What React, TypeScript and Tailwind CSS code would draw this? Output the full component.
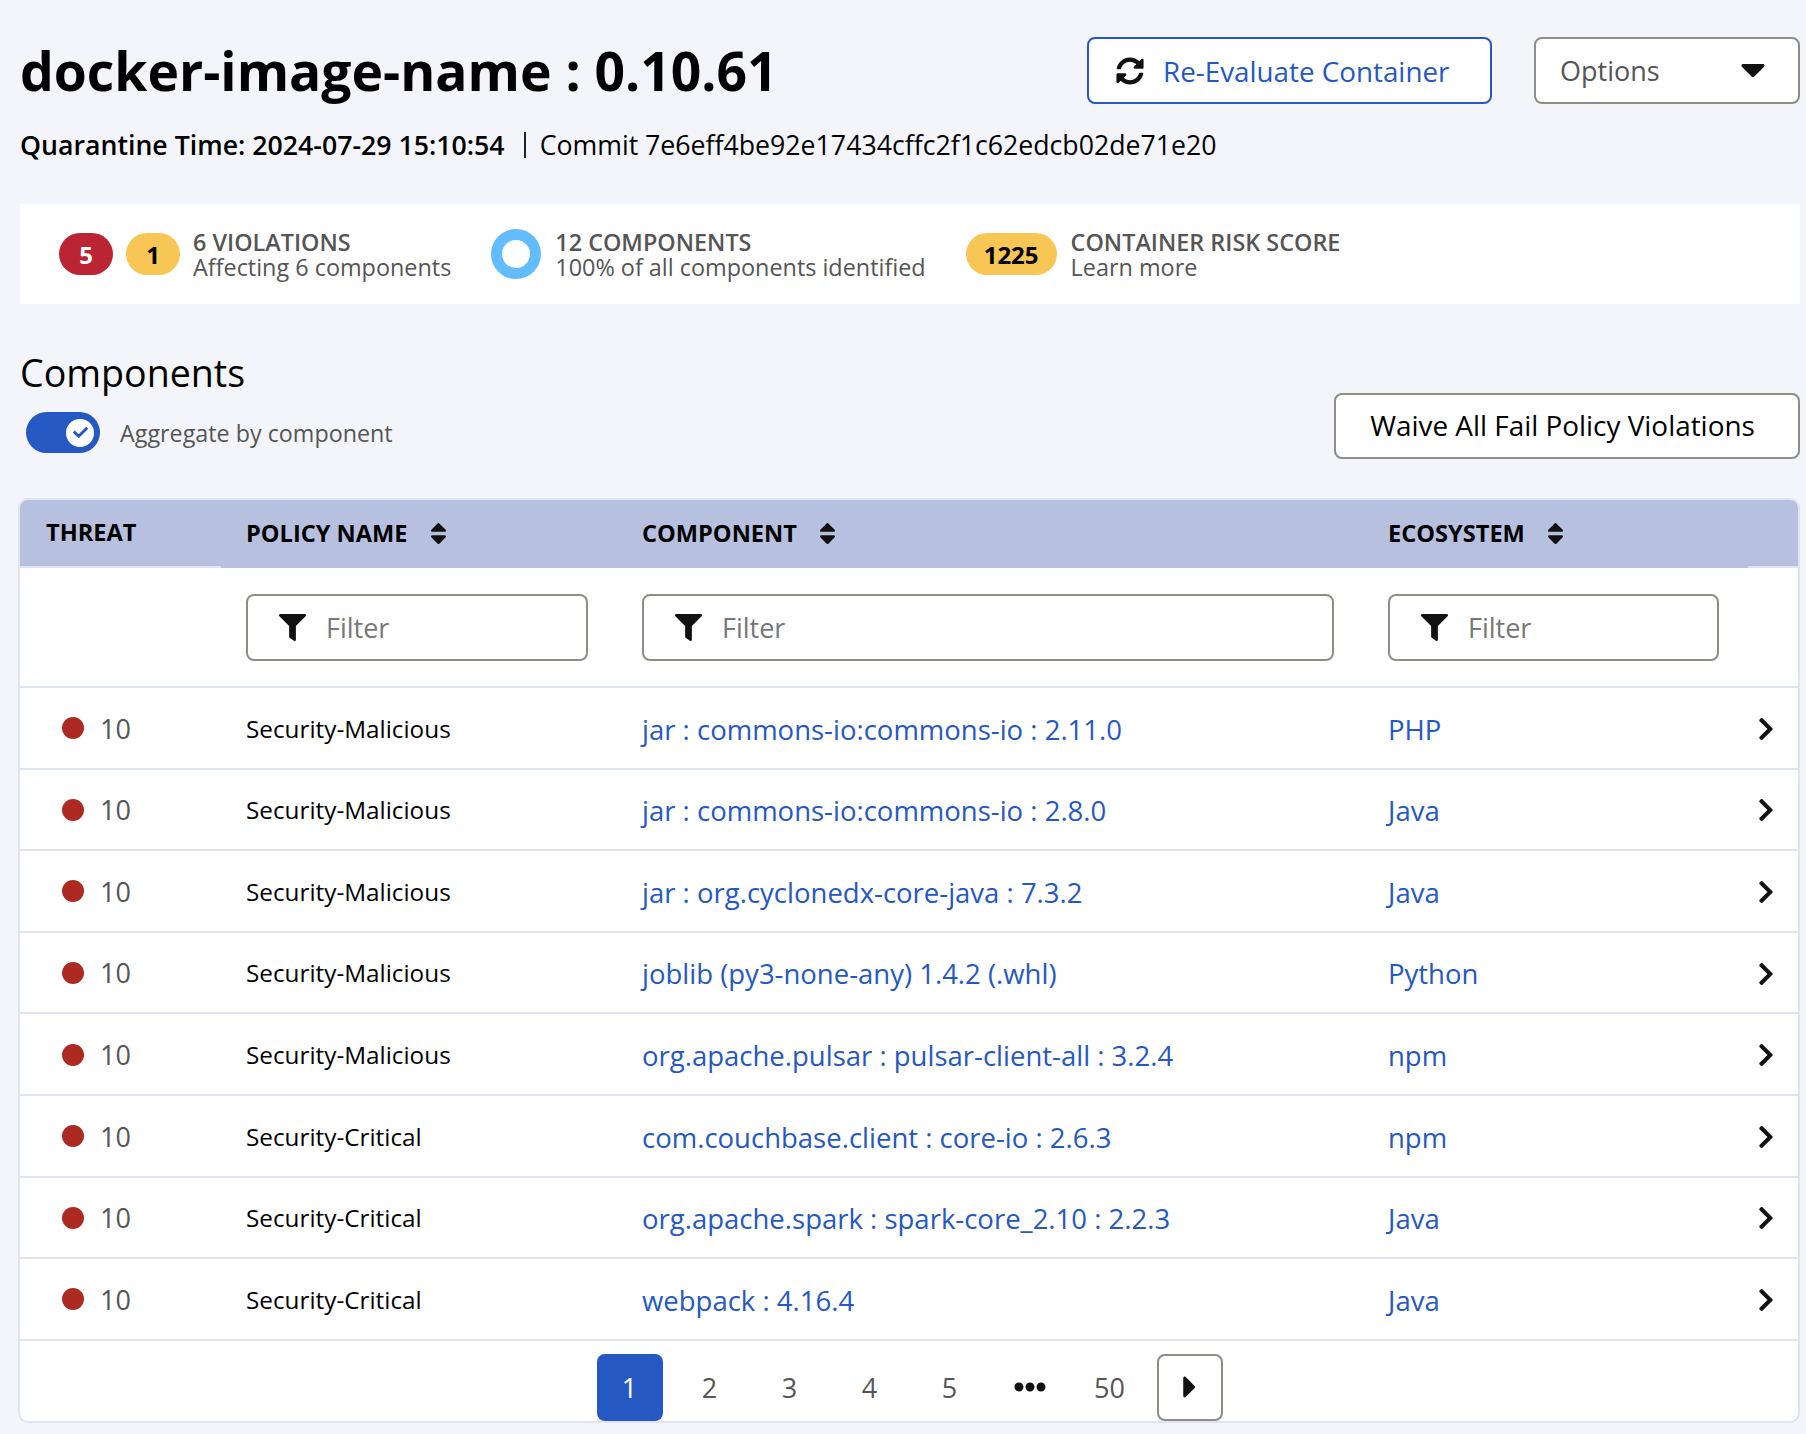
import React from 'react';
import { FaCaretDown, FaCaretRight, FaCheck, FaChevronRight, FaEllipsisH, FaFilter, FaSort, FaSyncAlt } from 'react-icons/fa';

const rows = [
  { policy: 'Security-Malicious', component: 'jar : commons-io:commons-io : 2.11.0', ecosystem: 'PHP' },
  { policy: 'Security-Malicious', component: 'jar : commons-io:commons-io : 2.8.0', ecosystem: 'Java' },
  { policy: 'Security-Malicious', component: 'jar : org.cyclonedx-core-java : 7.3.2', ecosystem: 'Java' },
  { policy: 'Security-Malicious', component: 'joblib (py3-none-any) 1.4.2 (.whl)', ecosystem: 'Python' },
  { policy: 'Security-Malicious', component: 'org.apache.pulsar : pulsar-client-all : 3.2.4', ecosystem: 'npm' },
  { policy: 'Security-Critical', component: 'com.couchbase.client : core-io : 2.6.3', ecosystem: 'npm' },
  { policy: 'Security-Critical', component: 'org.apache.spark : spark-core_2.10 : 2.2.3', ecosystem: 'Java' },
  { policy: 'Security-Critical', component: 'webpack : 4.16.4', ecosystem: 'Java' },
];

const columns = 'grid grid-cols-[201px_396px_746px_385px_1fr]';

function SortHeader({ label }: { label: string }) {
  return (
    <div className="flex items-center gap-[17px] pl-[25px]">
      <span>{label}</span>
      <FaSort className="text-[27px] text-[#111]" />
    </div>
  );
}

function FilterInput({ width }: { width: string }) {
  return (
    <div className={`ml-[25px] flex h-[67px] items-center rounded-[8px] border-2 border-[#8e8e86] bg-white pl-[31px] ${width}`}>
      <FaFilter className="text-[27px] text-[#111]" />
      <span className="ml-[20px] pt-[2px] text-[27px] text-[#777]">Filter</span>
    </div>
  );
}

export default function App() {
  return (
    <div className="min-h-[1434px] bg-[#f3f5fb] pl-[20px] pr-[6px] pt-[37px] font-['Open_Sans',sans-serif] text-black">
      {/* Title and actions */}
      <div className="flex items-center justify-between">
        <h1 className="text-[53.4px] font-bold leading-[67px]">docker-image-name : 0.10.61</h1>
        <div className="flex gap-[42px]">
          <button className="flex h-[67px] w-[405px] items-center rounded-[8px] border-2 border-[#2558c3] bg-white pl-[27px] pt-[2px] text-[27.8px] font-medium text-[#2558c3]">
            <FaSyncAlt className="mb-[2px] mr-[19px] text-[28px] text-[#111]" />
            Re-Evaluate Container
          </button>
          <button className="flex h-[67px] w-[266px] items-center justify-between rounded-[8px] border-2 border-[#8e8e86] bg-white pl-[24px] pr-[25px] pt-[2px] text-[27px] text-[#555]">
            Options
            <FaCaretDown className="mb-[5px] text-[40px] text-[#111]" />
          </button>
        </div>
      </div>

      <div className="mt-[24px] flex h-[34px] items-center text-[26.7px] leading-[34px]">
        <span className="font-semibold">Quarantine Time: 2024-07-29 15:10:54</span>
        <span className="ml-[19px] mr-[14px] h-[26px] w-[2px] bg-[#222]" />
        <span>Commit 7e6eff4be92e17434cffc2f1c62edcb02de71e20</span>
      </div>

      {/* Summary band */}
      <div className="mt-[42px] flex h-[100px] items-center bg-white pl-[39px] text-[23.4px] leading-[25px] text-[#555]">
        <span className="flex h-[42px] w-[54px] items-center justify-center rounded-full bg-[#bb2533] text-[24px] font-bold text-white">5</span>
        <span className="ml-[13px] flex h-[42px] w-[54px] items-center justify-center rounded-full bg-[#f8c655] text-[24px] font-bold text-black">1</span>
        <div className="ml-[13px] pt-[2px]">
          <div className="font-semibold">6 VIOLATIONS</div>
          <div>Affecting 6 components</div>
        </div>
        <span className="ml-[40px] h-[50px] w-[50px] rounded-full border-[11px] border-[#63bcfd]" />
        <div className="ml-[14px] pt-[2px]">
          <div className="font-semibold">12 COMPONENTS</div>
          <div>100% of all components identified</div>
        </div>
        <span className="ml-[40px] flex h-[42px] w-[91px] items-center justify-center rounded-full bg-[#f8c655] text-[24px] font-bold text-black">1225</span>
        <div className="ml-[14px] pt-[2px]">
          <div className="font-semibold">CONTAINER RISK SCORE</div>
          <div>Learn more</div>
        </div>
      </div>

      {/* Components heading */}
      <div className="mt-[49px] flex h-[106px] items-end justify-between">
        <div className="mb-[6px]">
          <h2 className="text-[37.6px] font-medium leading-[40px]">Components</h2>
          <div className="ml-[6px] mt-[19px] flex items-center">
            <div className="flex h-[41px] w-[74px] items-center justify-end rounded-full bg-[#2558c3] pr-[6px]">
              <span className="flex h-[28px] w-[28px] items-center justify-center rounded-full bg-white">
                <FaCheck className="text-[15px] text-[#2558c3]" />
              </span>
            </div>
            <span className="ml-[20px] pt-[1px] text-[23.3px] text-[#555]">Aggregate by component</span>
          </div>
        </div>
        <button className="h-[66px] w-[466px] rounded-[8px] border-2 border-[#8e8e86] bg-white pr-[9px] text-[27.9px] font-medium">
          Waive All Fail Policy Violations
        </button>
      </div>

      {/* Table */}
      <div className="-ml-[2px] mt-[39px] h-[925px] overflow-hidden rounded-[10px] border-2 border-[#dfe3f2] bg-white">
        <div className={`${columns} h-[68px] items-center bg-[#b8c0e0] text-[23.6px] font-bold`}>
          <div className="flex h-full items-center border-b-2 border-[#dfe3f2] pl-[26px]">THREAT</div>
          <SortHeader label="POLICY NAME" />
          <SortHeader label="COMPONENT" />
          <SortHeader label="ECOSYSTEM" />
          <div className="h-full border-b-2 border-[#dfe3f2]" />
        </div>
        <div className={`${columns} h-[120px] items-center border-b-2 border-[#dfe3f2]`}>
          <div />
          <FilterInput width="w-[342px]" />
          <FilterInput width="w-[692px]" />
          <FilterInput width="w-[331px]" />
        </div>
        {rows.map((row) => (
          <div key={row.component} className={`${columns} h-[81.6px] items-center border-b-2 border-[#dfe3f2] pt-[2px]`}>
            <div className="flex items-center pl-[42px] text-[27px] text-[#555]">
              <span className="mb-[1px] h-[22px] w-[22px] rounded-full bg-[#ad2a22]" />
              <span className="ml-[16px]">10</span>
            </div>
            <div className="pl-[25px] text-[24.3px] font-medium">{row.policy}</div>
            <div className="pl-[25px] pt-[1px] text-[27.5px] font-medium text-[#2558c3]">{row.component}</div>
            <div className="pl-[25px] pt-[1px] text-[27.5px] font-medium text-[#2558c3]">{row.ecosystem}</div>
            <div className="flex justify-end pr-[19px]">
              <FaChevronRight className="text-[26px] text-[#111]" />
            </div>
          </div>
        ))}
        {/* Pagination */}
        <div className="flex justify-center pl-[1px] pt-[13px] text-[27px] text-[#555]">
          <div className="flex items-center gap-[14px]">
            <span className="flex h-[67px] w-[66px] items-center justify-center rounded-[8px] bg-[#2558c3] pt-[2px] font-medium text-white">1</span>
            {['2', '3', '4', '5'].map((n) => (
              <span key={n} className="flex h-[67px] w-[66px] items-center justify-center pt-[2px]">{n}</span>
            ))}
            <span className="flex h-[67px] w-[66px] items-center justify-center text-[#111]">
              <FaEllipsisH className="text-[32px]" />
            </span>
            <span className="flex h-[67px] w-[66px] items-center justify-center pt-[2px]">50</span>
            <span className="flex h-[67px] w-[66px] items-center justify-center rounded-[8px] border-2 border-[#8e8e86]">
              <FaCaretRight className="text-[36px] text-[#111]" />
            </span>
          </div>
        </div>
      </div>
    </div>
  );
}
